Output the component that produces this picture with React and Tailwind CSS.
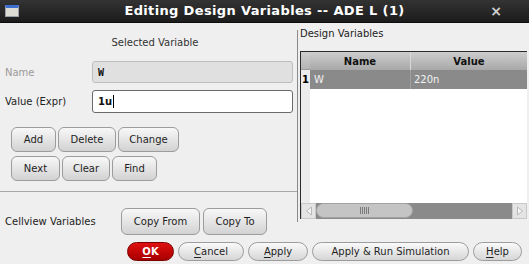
import React from 'react';

const sans = "font-['DejaVu_Sans','Liberation_Sans',sans-serif]";

function Btn({ children, className = '' }) {
  return (
    <button className={`flex items-center justify-center rounded-[6px] border border-[#9c9c9c] bg-linear-to-b from-[#f8f8f8] to-[#d2d2d2] text-[10px] text-[#1e1e1e] ${className}`}>
      {children}
    </button>
  );
}

function PillBtn({ children, className = '' }) {
  return (
    <button className={`flex h-[19px] items-center justify-center rounded-full border border-[#9c9c9c] bg-linear-to-b from-[#fafafa] to-[#d6d6d6] text-[10px] text-[#1e1e1e] ${className}`}>
      {children}
    </button>
  );
}

export default function App() {
  return (
    <div className={`flex h-[264px] w-[529px] flex-col overflow-hidden bg-[#efefef] ${sans}`}>
      {/* Title bar */}
      <div className="flex h-[23px] shrink-0 items-center border-b border-[#0d0d0d] bg-linear-to-b from-[#333333] to-[#1c1c1c]">
        <div className="w-[45px] pl-[5px]">
          <div className="h-[12px] w-[14px] border border-[#9aa0a8] border-t-[3px] border-t-[#3b6fd0] bg-[#dcdcd4]" />
        </div>
        <div className="flex-1 text-center text-[13px] font-bold tracking-[0.35px] text-white">
          Editing Design Variables -- ADE L (1)
        </div>
        <div className="flex w-[45px] justify-end pr-[27px] text-[14px] font-bold leading-none text-[#cfcfcf]">×</div>
      </div>

      {/* Main */}
      <div className="flex h-[196px] shrink-0">
        {/* Left panel */}
        <div className="flex w-[297px] flex-col">
          <div className="mt-[12px] pl-[13px] text-center text-[10px] text-[#333]">Selected Variable</div>
          <div className="mt-[11px] flex items-center">
            <span className="w-[92px] pl-[5px] text-[10px] text-[#9a9a9a]">Name</span>
            <div className="flex h-[22px] w-[201px] items-center rounded-[3px] border border-[#bdbdbd] bg-[#e0e0e0] pl-[5px] font-['DejaVu_Sans_Mono',monospace] text-[10px] font-bold text-[#111]">
              W
            </div>
          </div>
          <div className="mt-[7px] flex items-center">
            <span className="w-[92px] pl-[5px] text-[10px] text-[#222]">Value (Expr)</span>
            <div className="flex h-[23px] w-[201px] items-center rounded-[3px] border border-[#6a6a6a] bg-white pl-[5px] text-[10px] font-bold text-[#111]">
              1u<span className="ml-[1px] h-[13px] w-px bg-black" />
            </div>
          </div>
          <div className="mt-[14px] flex gap-[2px] pl-[11px]">
            <Btn className="h-[25px] w-[45px]">Add</Btn>
            <Btn className="h-[25px] w-[58px]">Delete</Btn>
            <Btn className="h-[25px] w-[61px]">Change</Btn>
          </div>
          <div className="mt-[4px] flex gap-[2px] pl-[11px]">
            <Btn className="h-[25px] w-[49px]">Next</Btn>
            <Btn className="h-[25px] w-[48px]">Clear</Btn>
            <Btn className="h-[25px] w-[45px]">Find</Btn>
          </div>
          <div className="mt-[10px] h-px w-full bg-[#a8a8a8]" />
        </div>
        <div className="mt-[7px] h-[192px] w-px bg-[#8a8a8a]" />

        {/* Right panel */}
        <div className="ml-[2px] flex flex-1 flex-col">
          <div className="mt-[3px] text-[10px] text-[#222]">Design Variables</div>
          <div className="mt-[10px] flex w-[227px] flex-1 flex-col border-l border-t border-[#2a2a2a]">
            <div className="flex flex-1">
              {/* Row header column */}
              <div className="flex w-[9px] flex-col bg-[#ececec]">
                <div className="h-[18px] border-b border-[#9a9a9a] bg-linear-to-b from-[#d0d0d0] to-[#b4b4b4]" />
                <div className="flex h-[19px] items-center justify-center text-[10px] font-bold text-black">1</div>
              </div>
              <div className="flex flex-1 flex-col bg-white">
                <div className="flex h-[18px] bg-linear-to-b from-[#cdcdcd] to-[#a8a8a8] text-[10px] font-bold text-[#111]">
                  <div className="flex w-[101px] items-center justify-center border-r border-[#d8d8d8]">Name</div>
                  <div className="flex flex-1 items-center justify-center">Value</div>
                </div>
                <div className="flex h-[19px] bg-[#8a8a8a] text-[10px] text-[#f2f2f2]">
                  <div className="flex w-[101px] items-center border-r border-[#a0a0a0] pl-[4px]">W</div>
                  <div className="flex flex-1 items-center pl-[3px]">220n</div>
                </div>
              </div>
            </div>
            {/* Scrollbar */}
            <div className="flex h-[16px] bg-[#8a8a8a]">
              <div className="flex w-[15px] items-center justify-center border border-[#c8c8c8] bg-[#e4e4e4]">
                <svg width="8" height="10" viewBox="0 0 8 10">
                  <path d="M6.5 1 L1.5 5 L6.5 9 Z" fill="#f4f4f4" stroke="#b8b8b8" strokeWidth="1" />
                </svg>
              </div>
              <div className="flex h-[15px] w-[97px] items-center justify-center rounded-full border border-[#a2a2a2] bg-[#c4c4c4]">
                <div className="flex gap-[1px]">
                  <span className="h-[7px] w-px bg-[#7a7a7a]" />
                  <span className="h-[7px] w-px bg-[#7a7a7a]" />
                  <span className="h-[7px] w-px bg-[#7a7a7a]" />
                  <span className="h-[7px] w-px bg-[#7a7a7a]" />
                  <span className="h-[7px] w-px bg-[#7a7a7a]" />
                </div>
              </div>
              <div className="flex-1" />
              <div className="flex w-[15px] items-center justify-center border border-[#c8c8c8] bg-[#e4e4e4]">
                <svg width="8" height="10" viewBox="0 0 8 10">
                  <path d="M1.5 1 L6.5 5 L1.5 9 Z" fill="#f4f4f4" stroke="#b8b8b8" strokeWidth="1" />
                </svg>
              </div>
            </div>
          </div>
        </div>
      </div>

      {/* Cellview row */}
      <div className="-mt-[11px] flex items-center">
        <span className="w-[121px] pl-[5px] text-[10px] text-[#222]">Cellview Variables</span>
        <div className="flex gap-[3px]">
          <Btn className="h-[27px] w-[79px]">Copy From</Btn>
          <Btn className="h-[27px] w-[64px]">Copy To</Btn>
        </div>
      </div>

      {/* Bottom buttons */}
      <div className="mt-[7px] flex justify-end gap-[4px] pr-[7px]">
        <button className="flex h-[19px] w-[47px] items-center justify-center rounded-full border border-[#7a0000] bg-linear-to-b from-[#e01010] to-[#a80000] text-[10px] font-bold text-white">
          <span className="underline underline-offset-2">O</span>K
        </button>
        <PillBtn className="w-[66px]">
          <span className="underline underline-offset-2">C</span>ancel
        </PillBtn>
        <PillBtn className="w-[60px]">
          <span className="underline underline-offset-2">A</span>pply
        </PillBtn>
        <PillBtn className="w-[157px]">Apply &amp; Run Simulation</PillBtn>
        <PillBtn className="w-[49px]">
          <span className="underline underline-offset-2">H</span>elp
        </PillBtn>
      </div>
    </div>
  );
}
